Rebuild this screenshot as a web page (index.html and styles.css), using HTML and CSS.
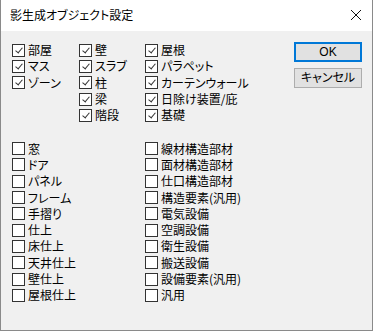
FILE: index.html
```html
<!DOCTYPE html>
<html lang="ja">
<head>
    <meta charset="UTF-8">
    <title>影生成オブジェクト設定</title>
    <link rel="stylesheet" href="styles.css">
</head>
<body>

    <div class="window">
        <div class="titlebar">
            <span class="title">影生成オブジェクト設定</span>
            <svg class="close" width="12" height="12" viewBox="0 0 12 12">
                <path d="M1 1 L11 11 M11 1 L1 11" stroke="#111" stroke-width="1" fill="none"/>
            </svg>
        </div>

        <div class="body">
            <div class="groups">
                <!-- 上段: 建築要素 -->
                <div class="upper">
                    <div class="col col1">
                        <label class="item"><span class="box on"></span>部屋</label>
                        <label class="item"><span class="box on"></span>マス</label>
                        <label class="item"><span class="box on"></span>ゾーン</label>
                    </div>
                    <div class="col col2">
                        <label class="item"><span class="box on"></span>壁</label>
                        <label class="item"><span class="box on"></span>スラブ</label>
                        <label class="item"><span class="box on"></span>柱</label>
                        <label class="item"><span class="box on"></span>梁</label>
                        <label class="item"><span class="box on"></span>階段</label>
                    </div>
                    <div class="col col3">
                        <label class="item"><span class="box on"></span>屋根</label>
                        <label class="item"><span class="box on"></span>パラペット</label>
                        <label class="item"><span class="box on"></span>カーテンウォール</label>
                        <label class="item"><span class="box on"></span>日除け装置/庇</label>
                        <label class="item"><span class="box on"></span>基礎</label>
                    </div>
                </div>

                <!-- 下段: その他 -->
                <div class="lower">
                    <div class="col col-wide">
                        <label class="item"><span class="box"></span>窓</label>
                        <label class="item"><span class="box"></span>ドア</label>
                        <label class="item"><span class="box"></span>パネル</label>
                        <label class="item"><span class="box"></span>フレーム</label>
                        <label class="item"><span class="box"></span>手摺り</label>
                        <label class="item"><span class="box"></span>仕上</label>
                        <label class="item"><span class="box"></span>床仕上</label>
                        <label class="item"><span class="box"></span>天井仕上</label>
                        <label class="item"><span class="box"></span>壁仕上</label>
                        <label class="item"><span class="box"></span>屋根仕上</label>
                    </div>
                    <div class="col">
                        <label class="item"><span class="box"></span>線材構造部材</label>
                        <label class="item"><span class="box"></span>面材構造部材</label>
                        <label class="item"><span class="box"></span>仕口構造部材</label>
                        <label class="item"><span class="box"></span>構造要素(汎用)</label>
                        <label class="item"><span class="box"></span>電気設備</label>
                        <label class="item"><span class="box"></span>空調設備</label>
                        <label class="item"><span class="box"></span>衛生設備</label>
                        <label class="item"><span class="box"></span>搬送設備</label>
                        <label class="item"><span class="box"></span>設備要素(汎用)</label>
                        <label class="item"><span class="box"></span>汎用</label>
                    </div>
                </div>
            </div>

            <div class="buttons">
                <button class="btn default">OK</button>
                <button class="btn">キャンセル</button>
            </div>
        </div>
    </div>

</body>
</html>
```

FILE: styles.css
```css
html, body {
    margin: 0;
    padding: 0;
}

body {
    width: 373px;
    height: 331px;
    overflow: hidden;
    font-family: "Noto Sans CJK JP", "DejaVu Sans", sans-serif;
    font-size: 12px;
    font-feature-settings: "palt";
    color: #000;
}

.window {
    box-sizing: border-box;
    width: 373px;
    height: 331px;
    border: 1px solid #8a8a8a;
    border-top: none;
    background-color: #f0f0f0;
    display: flex;
    flex-direction: column;
}

.titlebar {
    height: 31px;
    background-color: #fff;
    display: flex;
    align-items: center;
    padding: 0 0 0 9px;
    flex-shrink: 0;
}

.title {
    flex: 1;
    font-size: 12px;
    line-height: 14px;
    margin-top: -1px;
}

.close {
    margin-right: 10px;
    margin-top: -1px;
}

.body {
    flex: 1;
    display: flex;
    padding: 11px 0 0 11px;
}

.groups {
    flex: 1;
    display: flex;
    flex-direction: column;
    gap: 17px;
}

.upper, .lower {
    display: flex;
}

.col {
    display: flex;
    flex-direction: column;
}
.col1 { width: 67px; }
.col2 { width: 66px; }
.col-wide { width: 133px; }

.item {
    height: 16.3px;
    display: flex;
    align-items: center;
    white-space: nowrap;
    line-height: 14px;
}

.box {
    box-sizing: border-box;
    width: 13px;
    height: 13px;
    border: 1px solid #333;
    background-color: #fff;
    margin-right: 3px;
    flex-shrink: 0;
    position: relative;
}
/* チェックマーク */
.box.on::after {
    content: "";
    position: absolute;
    left: 4px;
    top: 1px;
    width: 3px;
    height: 6px;
    border-right: 1px solid #333;
    border-bottom: 1px solid #333;
    transform: rotate(40deg);
}

.buttons {
    width: 68px;
    margin-right: 10px;
    display: flex;
    flex-direction: column;
    gap: 6px;
}

.btn {
    box-sizing: border-box;
    width: 68px;
    height: 20px;
    padding: 0;
    font-family: "Liberation Sans", "Noto Sans CJK JP", sans-serif;
    font-size: 12px;
    font-feature-settings: "palt";
    line-height: 14px;
    background-color: #e1e1e1;
    border: 1px solid #adadad;
    color: #000;
}
.btn.default {
    border: 2px solid #0078d7;
}
```
